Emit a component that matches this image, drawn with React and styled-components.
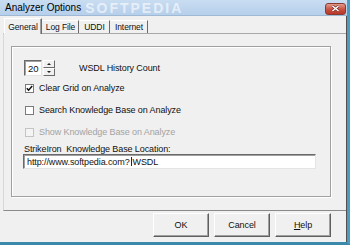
import React from "react";
import styled, { createGlobalStyle } from "styled-components";

const GlobalStyle = createGlobalStyle`
  html, body {
    margin: 0;
    padding: 0;
    background: #f0f0f0;
  }
  body {
    font-family: "Liberation Sans", Arial, sans-serif;
  }
`;

const Window = styled.div`
  width: 350px;
  height: 245px;
  box-sizing: border-box;
  display: flex;
  flex-direction: column;
  background: #f0f0f0;
  border-right: 3px solid #4a9cc0;
  border-bottom: 3px solid #3a88aa;
  font-size: 9px;
  letter-spacing: -0.1px;
  color: #111;
  overflow: hidden;
`;

const TitleBar = styled.div`
  height: 16px;
  flex: none;
  display: flex;
  align-items: center;
  justify-content: space-between;
  padding: 0 1px 0 5px;
  background: linear-gradient(#c9ddf2, #b6cfea);
  border-bottom: 1px solid #9fb8d3;
  box-sizing: border-box;
`;

const Title = styled.span`
  font-size: 10px;
  letter-spacing: 0;
  color: #000;
`;

const Watermark = styled.span`
  flex: 1;
  margin-left: 4px;
  font-size: 14px;
  font-weight: bold;
  letter-spacing: 2px;
  line-height: 1;
  color: rgba(255, 255, 255, 0.6);
`;

const CloseButton = styled.div`
  width: 21px;
  height: 12px;
  margin-top: 2px;
  box-sizing: border-box;
  border: 1px solid #8a3b31;
  border-radius: 3px;
  background: linear-gradient(#e19a8e, #c8503f 55%, #b9382a);
  display: flex;
  align-items: center;
  justify-content: center;
`;

const Body = styled.div`
  flex: 1;
  display: flex;
  flex-direction: column;
  padding: 0 0 0 3px;
  border-right: 1px solid #505050;
`;

const TabStrip = styled.div`
  height: 17px;
  flex: none;
  display: flex;
  align-items: flex-end;
  padding-left: 1px;
`;

const Tab = styled.div`
  width: ${(p) => p.$w}px;
  height: ${(p) => (p.$active ? 16 : 13)}px;
  box-sizing: border-box;
  display: flex;
  align-items: ${(p) => (p.$active ? "flex-start" : "center")};
  justify-content: center;
  padding-top: ${(p) => (p.$active ? 3 : 0)}px;
  font-size: 8.5px;
  background: #f0f0f0;
  border-top: 1px solid #ffffff;
  border-left: 1px solid ${(p) => (p.$active ? "#ffffff" : "#f0f0f0")};
  border-right: 1px solid #6b6b6b;
  box-shadow: ${(p) => (p.$active ? "inset -1px 0 0 #a0a0a0" : "none")};
  margin-bottom: ${(p) => (p.$active ? -1 : 0)}px;
  position: relative;
  z-index: ${(p) => (p.$active ? 2 : 1)};
`;

const TabPanel = styled.div`
  height: 178px;
  flex: none;
  box-sizing: border-box;
  border-top: 1px solid #a8a8a8;
  border-left: 1px solid #d8d8d8;
  border-bottom: 1px solid #8a8a8a;
  padding: 12px 0 0 7px;
`;

const GroupBox = styled.div`
  width: 320px;
  height: 151px;
  box-sizing: border-box;
  border: 1px solid #a0a0a0;
  box-shadow: inset 1px 1px 0 #fff, 1px 1px 0 #fff;
  padding: 13px 0 0 12px;
  display: flex;
  flex-direction: column;
`;

const Row = styled.div`
  display: flex;
  align-items: center;
  margin-top: ${(p) => p.$gap || 0}px;
  color: ${(p) => (p.$disabled ? "#a3a3a3" : "#111")};
`;

const SpinInput = styled.div`
  width: 18px;
  height: 16px;
  box-sizing: border-box;
  background: #fff;
  border-top: 1px solid #6a6a6a;
  border-left: 1px solid #6a6a6a;
  border-right: 1px solid #e4e4e4;
  border-bottom: 1px solid #e4e4e4;
  box-shadow: inset 1px 1px 0 #a0a0a0;
  padding-left: 3px;
  display: flex;
  align-items: center;
  font-size: 9.5px;
`;

const Spinner = styled.div`
  width: 12px;
  height: 16px;
  margin-left: 1px;
  display: flex;
  flex-direction: column;
`;

const SpinButton = styled.div`
  flex: 1;
  box-sizing: border-box;
  background: #f0f0f0;
  border-top: 1px solid #fff;
  border-left: 1px solid #fff;
  border-right: 1px solid #6a6a6a;
  border-bottom: 1px solid #6a6a6a;
  display: flex;
  align-items: center;
  justify-content: center;
`;

const Arrow = styled.span`
  width: 0;
  height: 0;
  border-left: 2px solid transparent;
  border-right: 2px solid transparent;
  ${(p) =>
    p.$up ? "border-bottom: 2px solid #222;" : "border-top: 2px solid #222;"}
`;

const SpinLabel = styled.span`
  margin-left: 24px;
`;

const Box = styled.div`
  width: 9px;
  height: 9px;
  box-sizing: border-box;
  margin: 0 5px 0 1px;
  background: ${(p) => (p.$disabled ? "#f4f4f4" : "#fff")};
  border: 1px solid ${(p) => (p.$disabled ? "#c4c4c4" : "#7a7a7a")};
  display: flex;
  align-items: center;
  justify-content: center;
`;

const FieldLabel = styled.div`
  margin-top: 7px;
  height: 10px;
  line-height: 10px;
`;

const TextField = styled.div`
  width: 293px;
  height: 15px;
  margin-left: -1px;
  box-sizing: border-box;
  background: #fff;
  border-top: 1px solid #6a6a6a;
  border-left: 1px solid #6a6a6a;
  border-right: 1px solid #e4e4e4;
  border-bottom: 1px solid #e4e4e4;
  box-shadow: inset 1px 1px 0 #a0a0a0;
  padding-left: 3px;
  display: flex;
  align-items: center;
`;

const Caret = styled.span`
  display: inline-block;
  width: 1px;
  height: 9px;
  margin: 0 1px;
  background: #222;
`;

const ButtonRow = styled.div`
  display: flex;
  justify-content: flex-end;
  gap: 5px;
  padding: 2px 15px 0 0;
`;

const Button = styled.div`
  width: 56px;
  height: 24px;
  box-sizing: border-box;
  background: #f0f0f0;
  border-top: 1px solid #fff;
  border-left: 1px solid #fff;
  border-right: 1px solid #5f5f5f;
  border-bottom: 1px solid #5f5f5f;
  box-shadow: inset -1px -1px 0 #a0a0a0;
  display: flex;
  align-items: center;
  justify-content: center;
`;

const Check = () => (
  <svg width="7" height="7" viewBox="0 0 7 7">
    <path d="M0.8 3.2 L2.6 5.2 L6.2 1" fill="none" stroke="#111" strokeWidth="1.5" />
  </svg>
);

const CloseIcon = () => (
  <svg width="9" height="7" viewBox="0 0 9 7">
    <path d="M1.5 1 L7.5 6 M7.5 1 L1.5 6" stroke="#6a2019" strokeWidth="2.6" />
    <path d="M1.5 1 L7.5 6 M7.5 1 L1.5 6" stroke="#fff" strokeWidth="1.6" />
  </svg>
);

const tabs = [
  { label: "General", w: 38, active: true },
  { label: "Log File", w: 37 },
  { label: "UDDI", w: 31 },
  { label: "Internet", w: 38 },
];

const checks = [
  { label: "Clear Grid on Analyze", checked: true, gap: 7 },
  { label: "Search Knowledge Base on Analyze", gap: 12 },
  { label: "Show Knowledge Base on Analyze", disabled: true, gap: 12 },
];

const App = () => {
  return (
    <>
      <GlobalStyle />
      <Window>
        <TitleBar>
          <Title>Analyzer Options</Title>
          <Watermark>SOFTPEDIA</Watermark>
          <CloseButton>
            <CloseIcon />
          </CloseButton>
        </TitleBar>
        <Body>
          <TabStrip>
            {tabs.map((t) => (
              <Tab key={t.label} $w={t.w} $active={t.active}>
                {t.label}
              </Tab>
            ))}
          </TabStrip>
          <TabPanel>
            <GroupBox>
              <Row>
                <SpinInput>20</SpinInput>
                <Spinner>
                  <SpinButton>
                    <Arrow $up />
                  </SpinButton>
                  <SpinButton>
                    <Arrow />
                  </SpinButton>
                </Spinner>
                <SpinLabel>WSDL History Count</SpinLabel>
              </Row>
              {checks.map((c) => (
                <Row key={c.label} $gap={c.gap} $disabled={c.disabled}>
                  <Box $disabled={c.disabled}>{c.checked && <Check />}</Box>
                  {c.label}
                </Row>
              ))}
              <FieldLabel>StrikeIron&nbsp; Knowledge Base Location:</FieldLabel>
              <TextField>
                http://www.softpedia.com?<Caret />WSDL
              </TextField>
            </GroupBox>
          </TabPanel>
          <ButtonRow>
            <Button>OK</Button>
            <Button>Cancel</Button>
            <Button>
              <span>
                <u>H</u>elp
              </span>
            </Button>
          </ButtonRow>
        </Body>
      </Window>
    </>
  );
};

export default App;
